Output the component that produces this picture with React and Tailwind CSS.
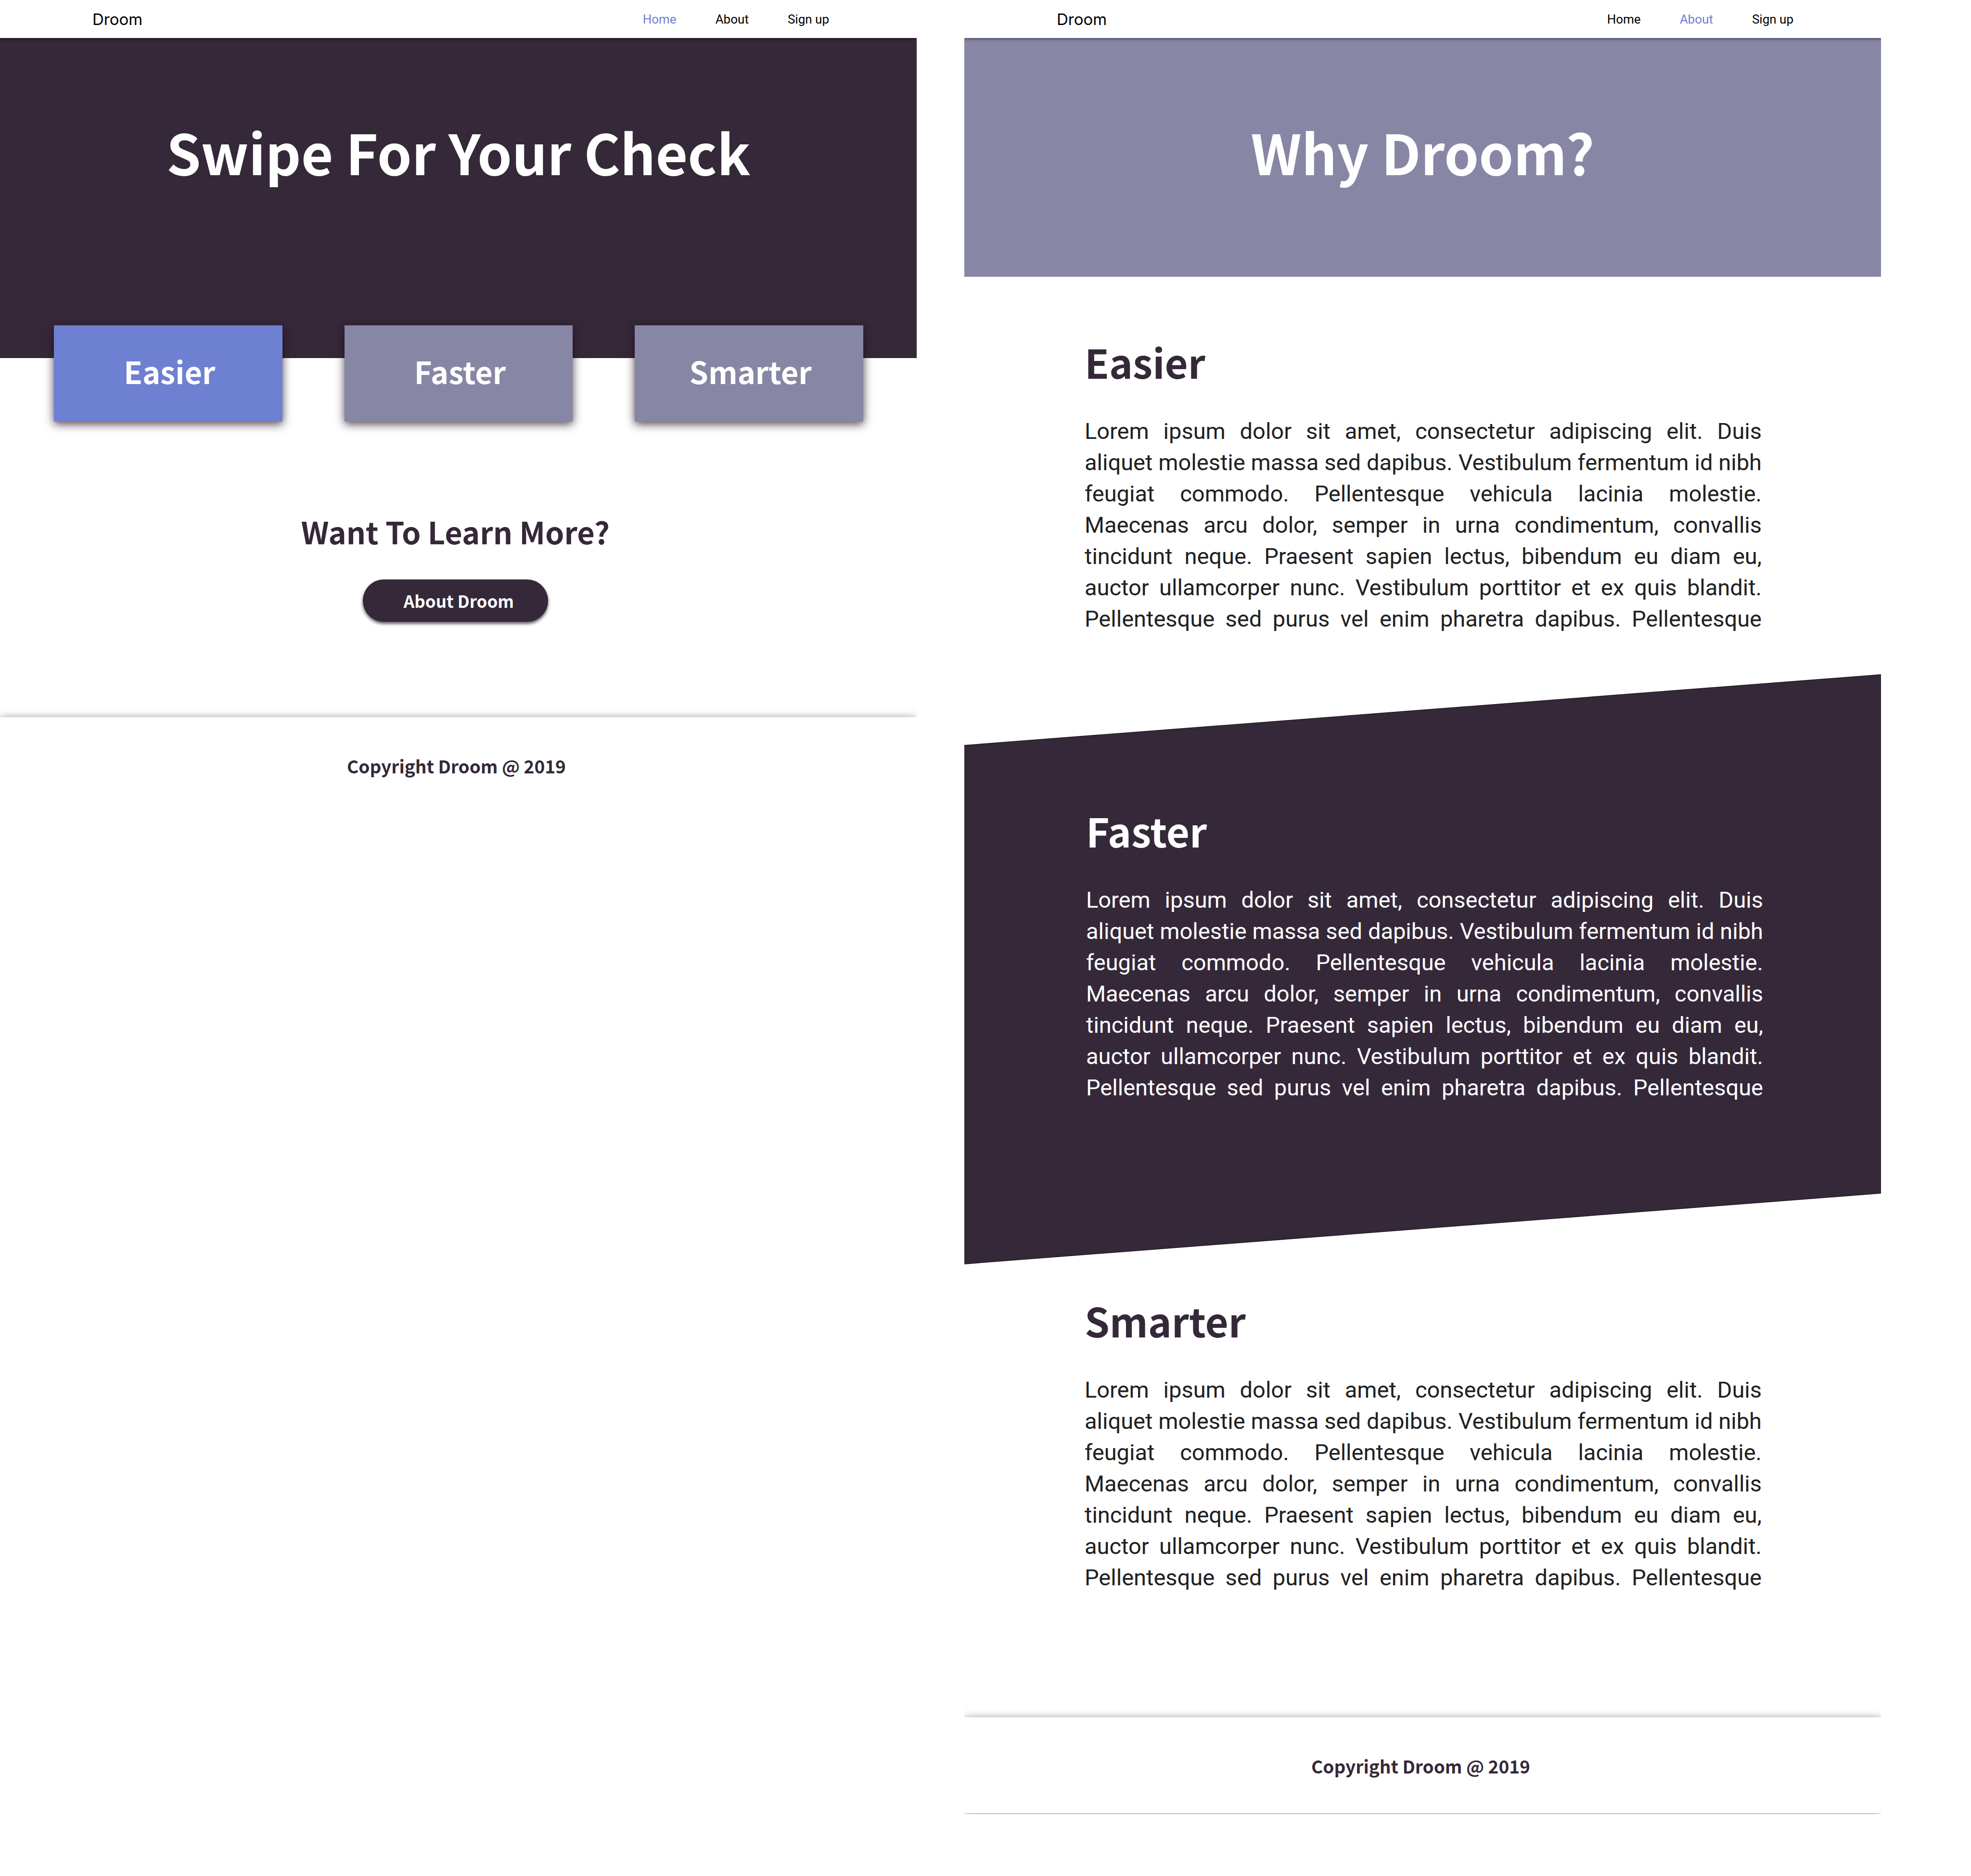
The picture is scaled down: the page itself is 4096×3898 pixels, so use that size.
import React from "react";

const LOREM =
  "Lorem ipsum dolor sit amet, consectetur adipiscing elit. Duis aliquet molestie massa sed dapibus. Vestibulum fermentum id nibh feugiat commodo. Pellentesque vehicula lacinia molestie. Maecenas arcu dolor, semper in urna condimentum, convallis tincidunt neque. Praesent sapien lectus, bibendum eu diam eu, auctor ullamcorper nunc. Vestibulum porttitor et ex quis blandit. Pellentesque sed purus vel enim pharetra dapibus. Pellentesque";

const NAV = ["Home", "About", "Sign up"];

function Header({ current }) {
  return (
    <header className="relative z-10 flex h-[79px] items-center justify-between bg-white pr-[182px] pl-[192px] shadow-[0_2px_6px_rgba(0,0,0,0.5)] [clip-path:inset(0_0_-12px_0)]">
      <a href="#" className="font-['Inter',sans-serif] text-[33px] leading-[40px] text-black">
        Droom
      </a>
      <nav className="flex items-center gap-[81px] font-['Roboto',sans-serif] text-[26px] leading-[32px]">
        {NAV.map((item) => (
          <a key={item} href="#" className={item === current ? "text-[#6e80d1]" : "text-black"}>
            {item}
          </a>
        ))}
      </nav>
    </header>
  );
}

function Footer({ className }) {
  return (
    <footer
      className={`flex h-[200px] items-center justify-center bg-white pt-[2px] pr-[8px] shadow-[0_5px_18px_rgba(53,40,57,0.8)] ${className}`}
    >
      <p className="text-[37px] leading-[60px] font-bold">Copyright Droom @ 2019</p>
    </footer>
  );
}

function Card({ children, active }) {
  return (
    <button
      type="button"
      className={`h-[200px] flex-1 pb-[10px] pl-[6px] text-[63px] leading-[100px] font-bold text-white shadow-[0_5px_18px_rgba(35,15,30,0.8)] ${active ? "bg-[#6e80d1]" : "bg-[#8886a5]"}`}
    >
      {children}
    </button>
  );
}

function Article({ title, className, bodyClass = "text-[#212121]" }) {
  return (
    <section className={className}>
      <h2 className="text-[83px] leading-[120px] font-bold">{title}</h2>
      <p
        className={`mt-[52px] text-justify font-['Roboto',sans-serif] text-[47px] leading-[65px] [text-align-last:justify] ${bodyClass}`}
      >
        {LOREM}
      </p>
    </section>
  );
}

function HomePage() {
  return (
    <main className="min-w-0 flex-[1905]">
      <Header current="Home" />
      <section className="h-[665px] bg-[#352839] pt-[140px] text-center text-white">
        <h1 className="text-[115px] leading-[190px] font-bold">Swipe For Your Check</h1>
      </section>
      <div className="relative -mt-[68px] flex gap-[129px] pr-[111px] pl-[112px]">
        <Card active>Easier</Card>
        <Card>Faster</Card>
        <Card>Smarter</Card>
      </div>
      <section className="flex flex-col items-center pt-[178px] pr-[12px] pb-[198px]">
        <h2 className="text-[63px] leading-[100px] font-bold">Want To Learn More?</h2>
        <button
          type="button"
          className="mt-[50px] h-[88px] w-[385px] rounded-full bg-[#352839] pl-[14px] text-[35px] leading-[56px] font-bold text-white shadow-[0_4px_6px_rgba(53,40,57,0.8)]"
        >
          About Droom
        </button>
      </section>
      <Footer className="[clip-path:inset(-24px_0_0_0)]" />
    </main>
  );
}

function AboutPage() {
  return (
    <main className="min-w-0 flex-[1905]">
      <Header current="About" />
      <section className="h-[496px] bg-[#8886a5] pt-[140px] text-center text-white">
        <h1 className="text-[115px] leading-[190px] font-bold">Why Droom?</h1>
      </section>
      <Article title="Easier" className="pt-[116px] pr-[248px] pb-[83px] pl-[250px]" />
      <div className="bg-[#0d0a0e] text-white [clip-path:polygon(0_147px,100%_0,100%_calc(100%_-_147px),0_100%)]">
        <div className="bg-[#352839] [clip-path:polygon(0_148px,100%_1px,100%_calc(100%_-_148px),0_calc(100%_-_1px))]">
          <Article title="Faster" className="pt-[264px] pr-[245px] pb-[335px] pl-[253px]" bodyClass="text-white" />
        </div>
      </div>
      <Article title="Smarter" className="pt-[56px] pr-[248px] pb-[258px] pl-[250px]" />
      <Footer className="[clip-path:inset(-24px_0_-1px_0)]" />
    </main>
  );
}

export default function App() {
  return (
    <div className="flex min-h-screen gap-[99px] bg-white pr-[187px] font-['Noto_Sans_CJK_SC',sans-serif] text-[#352839]">
      <HomePage />
      <AboutPage />
    </div>
  );
}
